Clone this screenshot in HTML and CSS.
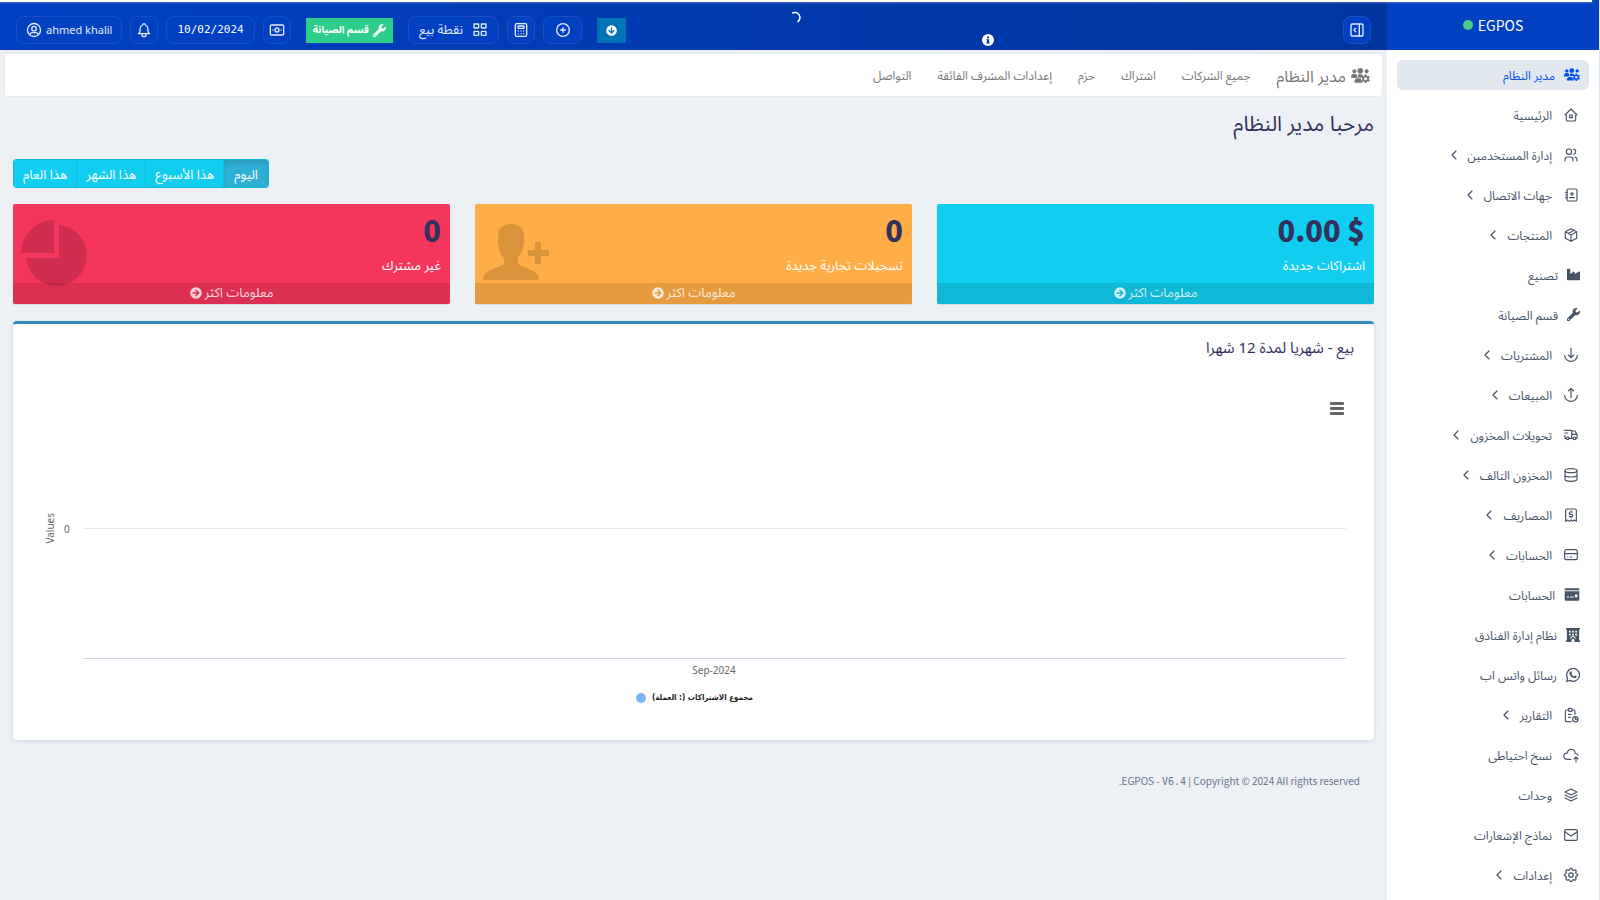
FILE: index.html
```html
<!DOCTYPE html>
<html lang="ar" dir="rtl">
<head>
<meta charset="utf-8">
<meta name="viewport" content="width=device-width, initial-scale=1">
<title>EGPOS</title>
<link rel="stylesheet" href="styles.css">
</head>
<body>
<svg class="sprite" aria-hidden="true">
  <symbol id="i-team" viewBox="0 0 640 512"><circle cx="310" cy="98" r="96"/><circle cx="112" cy="112" r="68"/><circle cx="528" cy="112" r="68"/><path d="M0 300c0-60 45-100 102-100h30c24 0 45 7 62 19-8 50 10 92 42 121H24c-14 0-24-10-24-24zM230 226c22-10 50-14 80-14 40 0 80 6 110 24-30 20-44 40-50 84H240c-12-24-18-60-10-94zM110 480c0-80 50-126 120-126h110c-10 60 10 110 60 146H136c-16 0-26-6-26-20z"/><path fill-rule="evenodd" d="M464 216h58l10 46 32 19 46-15 29 50-36 31v38l36 31-29 50-46-15-32 19-10 46h-58l-10-46-32-19-46 15-29-50 36-31v-38l-36-31 29-50 46 15 32-19zM493 314a52 52 0 1 0 0 104 52 52 0 0 0 0-104z"/></symbol>
  <symbol id="i-home" viewBox="0 0 24 24"><path d="M5 12H3l9-9 9 9h-2M5 12v7a2 2 0 0 0 2 2h10a2 2 0 0 0 2-2v-7M10 12h4v4h-4z"/></symbol>
  <symbol id="i-users" viewBox="0 0 24 24"><circle cx="9" cy="7" r="4"/><path d="M3 21v-2a4 4 0 0 1 4-4h4a4 4 0 0 1 4 4v2M16 3.100a4 4 0 0 1 0 7.800M21 21v-2a4 4 0 0 0-3-3.900"/></symbol>
  <symbol id="i-book" viewBox="0 0 24 24"><path d="M21 5v14a2 2 0 0 1-2 2H8a2 2 0 0 1-2-2V5a2 2 0 0 1 2-2h11a2 2 0 0 1 2 2zM10 16h7M4 8h3M4 12h3M4 16h3"/><circle cx="13.500" cy="10.500" r="1.800"/></symbol>
  <symbol id="i-box" viewBox="0 0 24 24"><path d="M12 2.500l8.500 4.700v9.600L12 21.500l-8.500-4.700V7.200zM12 12l8.500-4.800M12 12v9.500M12 12L3.500 7.200M16.500 5l-8.500 4.700"/></symbol>
  <symbol id="i-industry" viewBox="0 0 512 512"><path d="M0 56c0-13 11-24 24-24h80c13 0 24 11 24 24v184l136-98c15-10 36 1 36 20v78l176-98c16-10 36 1 36 20v294c0 13-11 24-24 24H24c-13 0-24-11-24-24z"/></symbol>
  <symbol id="i-wrench" viewBox="0 0 512 512"><path d="M507 109c-2-9-13-12-20-5l-74 74-68-11-11-68 74-74c7-7 4-18-5-20-49-12-103 1-141 39-41 41-52 100-34 151L19 404a64 64 0 1 0 89 89l209-209c51 18 111 7 152-34 38-38 51-92 38-141zM64 472a24 24 0 1 1 0-48 24 24 0 0 1 0 48z"/></symbol>
  <symbol id="i-down" viewBox="0 0 24 24"><path d="M2.500 12.500a9.500 9 0 0 0 19 0M12 2v14M8 12l4 4 4-4"/></symbol>
  <symbol id="i-up" viewBox="0 0 24 24"><path d="M2.500 12.500a9.500 9 0 0 0 19 0M12 16V2M8 6l4-4 4 4"/></symbol>
  <symbol id="i-truck" viewBox="0 0 24 24"><circle cx="7" cy="17" r="2"/><circle cx="17" cy="17" r="2"/><path d="M5 17H3v-4M2 5h11v12m-4 0h6m4 0h2v-6h-8m0-5h5l3 5M3 9h4"/></symbol>
  <symbol id="i-db" viewBox="0 0 24 24"><ellipse cx="12" cy="5.500" rx="9" ry="3"/><path d="M3 5.500v6.500c0 1.700 4 3 9 3s9-1.300 9-3V5.500M3 12v6.500c0 1.700 4 3 9 3s9-1.300 9-3V12"/></symbol>
  <symbol id="i-bill" viewBox="0 0 24 24"><path d="M4 21.500V5a2 2 0 0 1 2-2h12a2 2 0 0 1 2 2v16.500l-3-2-2.500 2-2.500-2-2.500 2-2.500-2zM14.500 7.500h-3.200a1.700 1.700 0 0 0 0 3.500h1.400a1.700 1.700 0 0 1 0 3.500H9.500M12 6v1.500M12 14.500V16"/></symbol>
  <symbol id="i-card" viewBox="0 0 24 24"><rect x="2.500" y="4" width="19" height="15" rx="3"/><path d="M2.500 10h19M7 15h.01M11 15h2"/></symbol>
  <symbol id="i-credit" viewBox="0 0 576 512"><path fill-rule="evenodd" d="M40 8h496c22 0 40 18 40 40v44H0V48C0 26 18 8 40 8zM0 130h576v334c0 22-18 40-40 40H40c-22 0-40-18-40-40zm80 200v40h90v-40zm130 0v40h140v-40zm190-70v104h100V260z"/></symbol>
  <symbol id="i-hotel" viewBox="0 0 512 512"><path fill-rule="evenodd" d="M0 0h512v56h-32v400h32v56H310v-60a54 54 0 0 0-108 0v60H0v-56h32V56H0zM110 96v64h64V96zm114 0v64h64V96zm114 0v64h64V96zM110 208v64h64v-64zm114 0v64h64v-64zm114 0v64h64v-64zM150 384h40c10-36 36-56 66-56s56 20 66 56h40c-10-60-52-96-106-96s-96 36-106 96z"/></symbol>
  <symbol id="i-whats" viewBox="0 0 24 24"><path fill="none" stroke="currentColor" stroke-width="2.200" d="M1.200 22.800l1.500-5.500A11 11 0 1 1 6.700 21.300z"/><path d="M8 6c.5-.4 1.300-.3 1.500.2l.9 2.200c.2.500-.7 1.300-1 1.700 1 2 2.400 3.300 4.600 4.300.5-.4 1.100-1.600 1.600-1.500l2.500 1.100c.5.300.2 1.700-.1 2.200-.9 1.200-2.600 1.600-4.400 1.100-3.600-1.100-6.200-3.400-7.500-6.600C5.400 9 5.700 7 8 6z"/></symbol>
  <symbol id="i-report" viewBox="0 0 24 24"><path d="M8 4.500H5.500a2 2 0 0 0-2 2V20a2 2 0 0 0 2 2H12M18 11V6.500a2 2 0 0 0-2-2h-2.500M8 11h4M8 15.500h3M18.500 16v2.500H21"/><rect x="8" y="2" width="6" height="4.500" rx="2"/><circle cx="18.500" cy="18.500" r="4"/></symbol>
  <symbol id="i-cloud" viewBox="0 0 24 24"><path d="M12 18.500H6.200A4.700 4.700 0 0 1 1.200 14c0-2.700 2-4.800 5-4.800a6 6 0 0 1 7.300-5.400c3 .5 5 2.800 4.700 6 2 0 3.600.9 4.300 2.600M19.500 22.500v-7M16.500 18l3-3 3 3"/></symbol>
  <symbol id="i-stack" viewBox="0 0 24 24"><path d="M12 3L3 7.500l9 4.500 9-4.500zM3 12l9 4.500 9-4.500M3 16.500L12 21l9-4.500"/></symbol>
  <symbol id="i-mail" viewBox="0 0 24 24"><rect x="2.500" y="4" width="19" height="16" rx="2"/><path d="M2.500 7l9.500 6.500L21.500 7"/></symbol>
  <symbol id="i-gear" viewBox="0 0 24 24"><g transform="translate(12 12) scale(1.1) translate(-12 -12)"><path d="M10.300 4.300c.4-1.700 3-1.700 3.400 0a1.700 1.700 0 0 0 2.600 1.100c1.500-1 3.300.8 2.400 2.300a1.700 1.700 0 0 0 1 2.600c1.800.4 1.800 3 0 3.400a1.700 1.700 0 0 0-1 2.600c.9 1.500-.9 3.300-2.400 2.400a1.700 1.700 0 0 0-2.600 1c-.4 1.800-3 1.800-3.400 0a1.700 1.700 0 0 0-2.600-1c-1.500.9-3.300-.9-2.400-2.400a1.700 1.700 0 0 0-1-2.600c-1.800-.4-1.800-3 0-3.400a1.700 1.700 0 0 0 1-2.600c-.9-1.500.9-3.300 2.400-2.400 1 .6 2.300.1 2.600-1z"/><circle cx="12" cy="12" r="3"/></g></symbol>
  <symbol id="i-left" viewBox="0 0 24 24"><path d="M15 6l-6 6 6 6"/></symbol>
  <symbol id="i-panel" viewBox="0 0 24 24"><path d="M5 3h14a2 2 0 0 1 2 2v14a2 2 0 0 1-2 2H5a2 2 0 0 1-2-2V5a2 2 0 0 1 2-2zM15.500 3v18M10 9.500L7.500 12l2.500 2.500"/></symbol>
  <symbol id="i-plus" viewBox="0 0 24 24"><circle cx="12" cy="12" r="9.500"/><path d="M8.500 12h7M12 8.500v7"/></symbol>
  <symbol id="i-calc" viewBox="0 0 24 24"><rect x="3.500" y="2.500" width="17" height="19" rx="2"/><rect x="7.500" y="6" width="9" height="3.500" rx="1"/><path d="M8 13.500h.01M12 13.500h.01M16 13.500h.01M8 17.500h.01M12 17.500h.01M16 17.500h.01"/></symbol>
  <symbol id="i-grid" viewBox="0 0 24 24"><rect x="3" y="3" width="7" height="6" rx="1"/><rect x="14" y="3" width="7" height="6" rx="1"/><rect x="3" y="14" width="7" height="6" rx="1"/><rect x="14" y="14" width="7" height="6" rx="1"/></symbol>
  <symbol id="i-cash" viewBox="0 0 24 24"><rect x="2" y="4.500" width="20" height="15" rx="2"/><circle cx="12" cy="12" r="3"/><path d="M18 12h.01M6 12h.01"/></symbol>
  <symbol id="i-bell" viewBox="0 0 24 24"><path d="M10 4.500a2 2 0 1 1 4 0 7 7 0 0 1 4 6v3.500a4 4 0 0 0 2.500 3.500h-17A4 4 0 0 0 6 14v-3.500a7 7 0 0 1 4-6M9 18v1a3 3 0 0 0 6 0v-1"/></symbol>
  <symbol id="i-user" viewBox="0 0 24 24"><circle cx="12" cy="12" r="9.800"/><circle cx="12" cy="10" r="3.400"/><path d="M5.800 18.800A4 4 0 0 1 9.600 16h4.800a4 4 0 0 1 3.800 2.800"/></symbol>
  <symbol id="i-arrow" viewBox="0 0 512 512"><path fill-rule="evenodd" d="M256 8a248 248 0 1 1 0 496 248 248 0 0 1 0-496zm-29 150 72 70H120a20 20 0 0 0-20 20v16c0 11 9 20 20 20h179l-72 70a24 24 0 0 0 0 34l11 11a24 24 0 0 0 34 0l131-131a24 24 0 0 0 0-34L272 113a24 24 0 0 0-34 0l-11 11a24 24 0 0 0 0 34z"/></symbol>
  <symbol id="i-info" viewBox="0 0 24 24"><path fill-rule="evenodd" d="M12 0a12 12 0 1 1 0 24 12 12 0 0 1 0-24zm0 4.500a2.200 2.200 0 1 0 0 4.400 2.200 2.200 0 0 0 0-4.400zM8.500 10.300v2.200h1.400v4.300H8.500V19h7v-2.200h-1.400v-6.500z"/></symbol>
</svg>

<div class="app">
  <div class="progress"></div>
  <aside class="sidebar">
    <a class="logo" href="#">EGPOS <span class="dot"></span></a>
    <nav class="menu">
      <a class="item active" href="#"><svg class="fa w16"><use href="#i-team"/></svg>مدير النظام</a>
      <a class="item" href="#"><svg class="ln"><use href="#i-home"/></svg>الرئيسية</a>
      <a class="item" href="#"><svg class="ln"><use href="#i-users"/></svg>إدارة المستخدمين<svg class="chev"><use href="#i-left"/></svg></a>
      <a class="item" href="#"><svg class="ln"><use href="#i-book"/></svg>جهات الاتصال<svg class="chev"><use href="#i-left"/></svg></a>
      <a class="item" href="#"><svg class="ln"><use href="#i-box"/></svg>المنتجات<svg class="chev"><use href="#i-left"/></svg></a>
      <a class="item" href="#"><svg class="fa"><use href="#i-industry"/></svg>تصنيع</a>
      <a class="item" href="#"><svg class="fa"><use href="#i-wrench"/></svg>قسم الصيانة</a>
      <a class="item" href="#"><svg class="ln"><use href="#i-down"/></svg>المشتريات<svg class="chev"><use href="#i-left"/></svg></a>
      <a class="item" href="#"><svg class="ln"><use href="#i-up"/></svg>المبيعات<svg class="chev"><use href="#i-left"/></svg></a>
      <a class="item" href="#"><svg class="ln"><use href="#i-truck"/></svg>تحويلات المخزون<svg class="chev"><use href="#i-left"/></svg></a>
      <a class="item" href="#"><svg class="ln"><use href="#i-db"/></svg>المخزون التالف<svg class="chev"><use href="#i-left"/></svg></a>
      <a class="item" href="#"><svg class="ln"><use href="#i-bill"/></svg>المصاريف<svg class="chev"><use href="#i-left"/></svg></a>
      <a class="item" href="#"><svg class="ln"><use href="#i-card"/></svg>الحسابات<svg class="chev"><use href="#i-left"/></svg></a>
      <a class="item" href="#"><svg class="fa w16"><use href="#i-credit"/></svg>الحسابات</a>
      <a class="item" href="#"><svg class="fa w14"><use href="#i-hotel"/></svg>نظام إدارة الفنادق</a>
      <a class="item" href="#"><svg class="fa w14"><use href="#i-whats"/></svg>رسائل واتس اب</a>
      <a class="item" href="#"><svg class="ln"><use href="#i-report"/></svg>التقارير<svg class="chev"><use href="#i-left"/></svg></a>
      <a class="item" href="#"><svg class="ln"><use href="#i-cloud"/></svg>نسخ احتياطى</a>
      <a class="item" href="#"><svg class="ln"><use href="#i-stack"/></svg>وحدات</a>
      <a class="item" href="#"><svg class="ln"><use href="#i-mail"/></svg>نماذج الإشعارات</a>
      <a class="item" href="#"><svg class="ln"><use href="#i-gear"/></svg>إعدادات<svg class="chev"><use href="#i-left"/></svg></a>
    </nav>
  </aside>

  <div class="page">
    <header class="topbar">
      <button class="tb sq" aria-label="القائمة"><svg class="ln"><use href="#i-panel"/></svg></button>
      <svg class="info"><use href="#i-info"/></svg>
      <svg class="spinner" viewBox="0 0 12 12"><path d="M3 1.200A5 5 0 0 1 8.500 10"/></svg>
      <div class="tools" dir="ltr">
        <button class="tb user"><svg class="ln"><use href="#i-user"/></svg>ahmed khalil</button>
        <button class="tb sq" aria-label="الإشعارات"><svg class="ln"><use href="#i-bell"/></svg></button>
        <button class="tb date">10/02/2024</button>
        <button class="tb sq" aria-label="النقد"><svg class="ln"><use href="#i-cash"/></svg></button>
        <button class="flat green" dir="rtl"><svg class="fa"><use href="#i-wrench"/></svg>قسم الصيانة</button>
        <button class="tb pos" dir="rtl"><svg class="ln"><use href="#i-grid"/></svg>نقطة بيع</button>
        <button class="tb sq" aria-label="آلة حاسبة"><svg class="ln"><use href="#i-calc"/></svg></button>
        <button class="tb wide" aria-label="إضافة"><svg class="ln"><use href="#i-plus"/></svg></button>
        <button class="flat blue" aria-label="تنزيل"><svg class="fa down"><use href="#i-arrow"/></svg></button>
      </div>
    </header>

    <nav class="subnav">
      <a class="brand" href="#"><svg class="fa w18"><use href="#i-team"/></svg>مدير النظام</a>
      <a href="#">جميع الشركات</a>
      <a href="#">اشتراك</a>
      <a href="#">حزم</a>
      <a href="#">إعدادات المشرف الفائقة</a>
      <a href="#">التواصل</a>
    </nav>

    <main class="content">
      <h1>مرحبا مدير النظام</h1>
      <div class="filters">
        <div class="group">
          <button class="on">اليوم</button><button>هذا الأسبوع</button><button>هذا الشهر</button><button>هذا العام</button>
        </div>
      </div>
      <section class="stats">
        <article class="stat aqua">
          <div class="inner"><p class="num"><bdi dir="ltr">0.00 $</bdi></p><p>اشتراكات جديدة</p></div>
          <a href="#">معلومات اكثر <svg class="fa"><use href="#i-arrow"/></svg></a>
        </article>
        <article class="stat amber">
          <div class="inner"><p class="num">0</p><p>تسجيلات تجارية جديدة</p></div>
          <svg class="art" viewBox="0 0 66 66"><path d="M28 4c8 0 13 4 13 12v5c0 4-1 5-1 8-1 4-4 7-5 9v6c4 3 15 5 20 11 1 1 1 3 1 5H0c0-2 0-4 1-5 5-6 16-8 20-11v-6c-2-2-4-5-5-9 0-3-1-4-1-8v-5C15 8 20 4 28 4zM52 22h6v8h8v6h-8v8h-6v-8h-7v-6h7z"/></svg>
          <a href="#">معلومات اكثر <svg class="fa"><use href="#i-arrow"/></svg></a>
        </article>
        <article class="stat red">
          <div class="inner"><p class="num">0</p><p>غير مشترك</p></div>
          <svg class="art" viewBox="0 0 66 66"><path d="M33 0v33H0A33 33 0 0 1 33 0zM38 5a30.500 30.500 0 1 1-33 33h33z"/></svg>
          <a href="#">معلومات اكثر <svg class="fa"><use href="#i-arrow"/></svg></a>
        </article>
      </section>

      <section class="card">
        <h2>بيع - شهريا لمدة 12 شهرا</h2>
        <div class="chart" dir="ltr">
          <button class="burger" aria-label="قائمة الرسم"><span></span><span></span><span></span></button>
          <div class="plot">
            <span class="ytitle">Values</span>
            <span class="ytick">0</span>
            <div class="area"><div class="gridline"></div></div>
          </div>
          <div class="xtick">Sep-2024</div>
          <div class="legend" dir="rtl">مجموع الاشتراكات (: العملة)<span class="mark"></span></div>
        </div>
      </section>
      <footer class="foot" dir="ltr">.EGPOS - <span class="mono">V6.4</span> | Copyright © 2024 All rights reserved</footer>
    </main>
  </div>
</div>
</body>
</html>
```
FILE: styles.css
```css
* { box-sizing: border-box; }
body { margin: 0; background: #edf1f6; color: #32325d; font: 12px/20px "Noto Sans Arabic", "Noto Sans", "DejaVu Sans", sans-serif; }
h1, h2, p { margin: 0; font-weight: 400; }
a { color: inherit; text-decoration: none; }
button { font: inherit; color: inherit; border: 0; padding: 0; background: none; cursor: pointer; }
svg { flex: none; overflow: visible; }
.sprite { position: absolute; width: 0; height: 0; }
.fa { width: 13px; height: 13px; fill: currentColor; }
.w14 { width: 14px; height: 14px; }
.w16 { width: 16px; height: 13px; }
.w18 { width: 19px; height: 15px; }
.ln, .chev { width: 16px; height: 16px; fill: none; stroke: currentColor; stroke-width: 2; stroke-linecap: round; stroke-linejoin: round; }

.app { display: flex; min-height: 100vh; }
.progress { position: absolute; z-index: 2; top: 0; left: 0; right: 8px; height: 2px; background: #fff; box-shadow: 0 0 3px #8fa8e4; }

.sidebar { width: 213px; flex: none; background: #fff; border-right: 1px solid #e2e6f0; }
.logo { display: flex; align-items: center; justify-content: center; gap: 5px; height: 50px; background: #0040c1; color: #fff; font: 14px/20px "Noto Sans CJK SC", "Noto Sans", sans-serif; }
.dot { width: 10px; height: 10px; border-radius: 50%; background: #47cd89; }
.menu { display: flex; flex-direction: column; gap: 10px; padding: 10px 10px 0; }
.item { display: flex; align-items: center; gap: 9px; height: 30px; padding: 3px 9px 0; border-radius: 6px; color: #475467; }
.item svg { margin-bottom: 4px; }
.item .ln { margin-inline: 1px 2px; stroke-width: 1.75; }
.item.active { background: #e2e8f0; color: #004eeb; }
.item .chev { margin-inline-start: -3px; stroke-width: 1.75; }

.page { flex: 1; min-width: 0; }
.topbar { position: relative; display: flex; align-items: center; justify-content: space-between; height: 50px; padding: 10px 16px 0; background: linear-gradient(to right, #0040c1, #00359e); color: #fff; }
.tools { display: flex; align-items: center; gap: 8px; }
.tb { display: flex; align-items: center; justify-content: center; gap: 4px; height: 28px; padding: 0 10px; border: 1px solid #194fc4; border-radius: 8px; background: #0040c1; color: #e6ecfa; }
.tb.sq { width: 28px; padding: 0; }
.tb.wide { width: 39px; padding: 0; }
.tb.pos { gap: 9px; font-size: 13px; }
.tb.date { font-family: "DejaVu Sans Mono", monospace; font-size: 11px; color: #fff; }
.tb.user { padding: 0 9px; font-family: "Noto Sans", sans-serif; font-size: 11px; }
.flat { display: flex; align-items: center; justify-content: center; gap: 4px; height: 25px; margin: 0 7px; }
.green { padding: 0 7px; background: #2dce89; font-size: 10px; font-weight: 700; color: #fff; }
.blue { width: 29px; background: #0073b7; color: #fff; }
.down { width: 11px; height: 11px; transform: rotate(90deg); }
.info { position: absolute; left: 982px; top: 34px; width: 12px; height: 12px; fill: #fff; }
.spinner { position: absolute; left: 789px; top: 12px; width: 12px; height: 12px; fill: none; stroke: #fff; stroke-width: 1.5px; }

.subnav { display: flex; align-items: center; gap: 26px; height: 44px; margin: 3px 4px 0; padding: 3px 12px 0; background: #fff; border: 1px solid #e5e8ee; border-radius: 4px; color: #777; }
.brand { display: flex; align-items: center; gap: 5px; font-size: 16px; }
.brand svg { margin-bottom: 3px; }

.content { padding: 15px 13px 0; }
h1 { font-size: 21px; line-height: 24px; }
.filters { display: flex; justify-content: flex-end; margin-top: 23px; }
.group { display: flex; border-radius: 3px; overflow: hidden; border: 1px solid #10b9d8; }
.group button { height: 27px; padding: 2px 9px 0; background: #11cdef; color: #fff; font-size: 13px; border-right: 1px solid #10bcdb; }
.group .on { padding: 2px 10px 0; background: #31b0d5; border: 0; box-shadow: inset 0 3px 5px rgba(0, 0, 0, .125); }
.stats { display: grid; grid-template-columns: repeat(3, 1fr); gap: 25px; margin-top: 16px; }
.stat { position: relative; display: flex; flex-direction: column; border-radius: 2px; color: #fff; box-shadow: 0 1px 1px rgba(0, 0, 0, .1); }
.inner { height: 79px; padding: 8px 9px 0; }
.num { font: 900 29px/34px "Noto Sans CJK SC", "Noto Sans", sans-serif; color: #32325d; }
.inner p + p { margin-top: 10px; font-size: 13px; }
.stat a { display: flex; align-items: center; justify-content: center; gap: 3px; height: 21px; padding-bottom: 1px; font-size: 13px; background: rgba(0, 0, 0, .1); color: rgba(255, 255, 255, .8); }
.stat .fa { width: 12px; height: 12px; }
.aqua { background: #11cdef; }
.amber { background: #ffad46; }
.red { background: #f5365c; }
.art { position: absolute; left: 8px; top: 16px; width: 66px; height: 66px; fill: rgba(0, 0, 0, .15); }

.card { margin-top: 17px; padding: 14px 20px 34px; background: #fff; border-top: 3px solid #3388bc; border-radius: 4px; box-shadow: 0 1px 4px rgba(50, 70, 110, .15); }
h2 { font-size: 15px; line-height: 20px; }
.chart { position: relative; padding: 40px 8px 0 10px; font: 10px/14px "Noto Sans", sans-serif; color: #666; }
.burger { position: absolute; top: 44px; right: 10px; display: flex; flex-direction: column; gap: 2px; width: 14px; }
.burger span { width: 100%; height: 3px; border-radius: 1px; background: #666; }
.plot { display: flex; align-items: center; height: 261px; }
.ytitle { width: 14px; margin-right: 7px; writing-mode: vertical-rl; transform: rotate(180deg); }
.ytick { width: 19px; }
.area { flex: 1; align-self: stretch; display: flex; align-items: center; border-bottom: 1px solid #ccd6eb; }
.gridline { flex: 1; height: 1px; background: #e6e6e6; }
.xtick { margin-top: 4px; padding-left: 39px; text-align: center; }
.legend { display: flex; align-items: center; justify-content: center; gap: 6px; margin-top: 13px; font: 700 8px/16px "DejaVu Sans Condensed", "DejaVu Sans", sans-serif; color: #222; }
.mark { width: 10px; height: 10px; border-radius: 50%; background: #7cb5ec; }
.foot { padding: 31px 14px 20px; text-align: right; font: 10px/20px "Noto Sans CJK SC", "Noto Sans", sans-serif; color: #67748e; }
.mono { font-family: "DejaVu Sans Mono", monospace; }
```
